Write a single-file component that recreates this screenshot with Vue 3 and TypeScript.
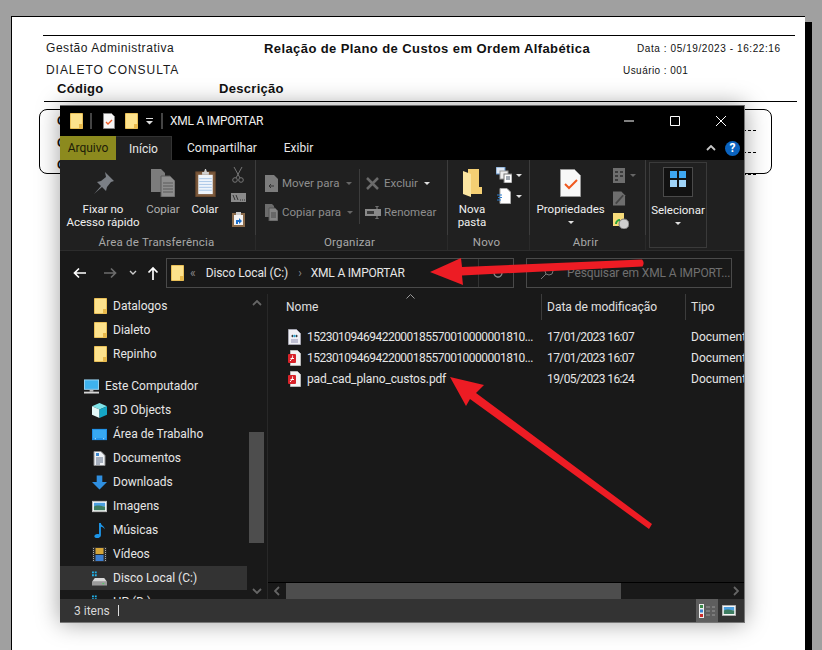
<template>
  <div class="page">
    <svg class="defs" width="0" height="0">
      <symbol id="folder" viewBox="0 0 13 16">
        <path d="M.5.5h12v15H.5z" fill="#fde28c" stroke="#e9bf57" />
        <path d="M9 11h3.500v4.500H9z" fill="#e8b84a" />
      </symbol>
      <symbol id="pdf" viewBox="0 0 13 16">
        <path d="M2.500.5h7l3 3v12h-10z" fill="#f4f4f4" stroke="#b9b9b9" />
        <rect x="0" y="4" width="8" height="9" rx="1" fill="#d8232a" />
        <path d="M2 11c2-2 3-4 2.500-5.500M2.500 8.500h3.500" stroke="#fff" fill="none" />
      </symbol>
      <symbol id="xmlfile" viewBox="0 0 13 16">
        <path d="M.5.5h8l4 4v11H.5z" fill="#f0f0f4" stroke="#a5a5b0" />
        <path d="M3 11h7M3 13h7" stroke="#8f8fb0" />
        <path d="M3 7l2-1.500v3zM10 7L8 5.500v3z" fill="#333" />
        <circle cx="6.500" cy="7" r="1.300" fill="#2f9fc9" />
      </symbol>
      <symbol id="pc" viewBox="0 0 16 15">
        <rect x=".5" y=".5" width="15" height="10" fill="#3fb2ee" stroke="#9ed7f5" />
        <path d="M6 11h4v2H6z" fill="#bbb" />
        <path d="M0 13h16v2H0z" fill="#d5d5d5" />
      </symbol>
      <symbol id="cube" viewBox="0 0 16 16">
        <path d="M8 0l8 3.500L8 7 0 3.500z" fill="#7fe3e8" />
        <path d="M0 3.500L8 7v9l-8-3.500z" fill="#e4f8f8" />
        <path d="M16 3.500L8 7v9l8-3.500z" fill="#15a6c6" />
      </symbol>
      <symbol id="desk" viewBox="0 0 16 12">
        <rect width="16" height="12" fill="#1f8fe6" />
        <path d="M1 1h14v9H1z" fill="#38a9f2" />
        <path d="M3 10.500h1M12 10.500h1" stroke="#fff" />
      </symbol>
      <symbol id="docs" viewBox="0 0 12 15">
        <path d="M.5.5h7l4 4v10H.5z" fill="#eef1f5" stroke="#8b8b8b" />
        <path d="M2.500 7h7M2.500 9h7M2.500 11h7M2.500 13h4" stroke="#5f6f86" />
        <path d="M2.500 2h3v3h-3z" fill="#3b87cf" />
      </symbol>
      <symbol id="dl" viewBox="0 0 16 15">
        <path d="M5 0h6v7h5l-8 8-8-8h5z" fill="#2f8fe0" />
      </symbol>
      <symbol id="pic" viewBox="0 0 16 12">
        <rect x=".5" y=".5" width="15" height="11" fill="#fff" stroke="#bfbfbf" />
        <path d="M2 2h12v4H2z" fill="#4b9fe0" />
        <path d="M2 6c3-2 6-1 12 0v4H2z" fill="#3e7d62" />
      </symbol>
      <symbol id="music" viewBox="0 0 11 16">
        <path d="M5 0h2c0 3 4 3 4 7-1-2-2-3-4-3v9c0 2-2 3-4 3s-3-1-3-2 2-3 5-2z" fill="#1c95e8" />
      </symbol>
      <symbol id="video" viewBox="0 0 14 15">
        <rect width="14" height="15" fill="#2c2c2c" />
        <path d="M3 1h8v6H3z" fill="#d5a63a" />
        <path d="M3 8h8v6H3z" fill="#3d7fd0" />
        <path d="M1 1v13M13 1v13" stroke="#aaa" stroke-dasharray="1 1" />
      </symbol>
      <symbol id="disk" viewBox="0 0 16 15">
        <path d="M0 0h2v2H0zM3 0h2v2H3zM0 3h2v2H0zM3 3h2v2H3z" fill="#22b3ea" />
        <path d="M3 7h10l3 4H0z" fill="#d8d8d8" />
        <path d="M0 11h16v4H0z" fill="#9b9b9b" />
        <path d="M11 12.500h2v1h-2z" fill="#43d65c" />
      </symbol>
    </svg>

    <div class="paper">
      <div class="rpt-head">
        <div class="rpt-row first">
          <span class="rpt-left">Gestão Administrativa</span>
          <strong class="rpt-title">Relação de Plano de Custos em Ordem Alfabética</strong>
          <span class="rpt-small">Data : 05/19/2023 - 16:22:16</span>
        </div>
        <div class="rpt-row second">
          <span class="rpt-left">DIALETO CONSULTA</span>
          <span></span>
          <span class="rpt-small user">Usuário : 001</span>
        </div>
        <div class="rpt-cols">
          <strong>Código</strong>
          <strong>Descrição</strong>
        </div>
      </div>
      <div class="rpt-box">
        <div v-for="n in 3" :key="n" class="rpt-line">
          <strong>C</strong>
          <span class="leader"></span>
        </div>
      </div>
    </div>

    <div class="window">
      <div class="titlebar">
        <svg class="t-folder"><use href="#folder" /></svg>
        <i class="t-sep"></i>
        <svg class="t-page" viewBox="0 0 12 16">
          <path d="M.5.5h8l3 3v12H.5z" fill="#f6f6f6" stroke="#888" />
          <path d="M3 9l2 2 4-4" fill="none" stroke="#ee5a24" stroke-width="1.300" />
        </svg>
        <svg class="t-folder second"><use href="#folder" /></svg>
        <svg class="t-caret" viewBox="0 0 8 8"><path d="M0 1h7v1H0zM0 4h7L3.500 7.500z" fill="#ddd" /></svg>
        <i class="t-sep two"></i>
        <span class="t-name">XML A IMPORTAR</span>
        <div class="controls">
          <svg viewBox="0 0 10 10"><path d="M0 5h10" stroke="#fff" /></svg>
          <svg viewBox="0 0 10 10"><path d="M.5.5h9v9h-9z" fill="none" stroke="#fff" /></svg>
          <svg viewBox="0 0 10 10"><path d="M0 0l10 10M10 0L0 10" stroke="#fff" /></svg>
        </div>
      </div>

      <div class="tabs">
        <span class="tab file">Arquivo</span>
        <span class="tab active">Início</span>
        <span class="tab share">Compartilhar</span>
        <span class="tab view">Exibir</span>
        <div class="tab-right">
          <svg viewBox="0 0 10 6"><path d="M1 5l4-4 4 4" fill="none" stroke="#c8c8c8" stroke-width="1.800" /></svg>
          <span class="help">?</span>
        </div>
      </div>

      <div class="ribbon">
        <section class="group clip">
          <div class="g-body">
            <div class="big fixar">
              <svg viewBox="0 0 22 22" class="ic-pin">
                <path d="M13 0l9 9-3 1-4 5-1 4-4-4-8 7 7-8-4-4 4-1 5-4z" fill="#7b7f85" />
              </svg>
              <span>Fixar no<br />Acesso rápido</span>
            </div>
            <div class="big copiar">
              <svg viewBox="0 0 24 28" class="ic-copy">
                <path d="M0 0h10l4 4v19H0z" fill="#7c7c7c" />
                <path d="M10 7h9l5 5v16H10z" fill="#8e8e8e" stroke="#5b5b5b" />
                <path d="M12 14h10M12 17h10M12 20h10M12 23h10" stroke="#5a5a5a" />
              </svg>
              <span>Copiar</span>
            </div>
            <div class="big colar">
              <svg viewBox="0 0 21 29" class="ic-paste">
                <rect x=".5" y="3" width="20" height="25.500" fill="#7d5a3c" stroke="#6a4a30" />
                <rect x="3" y="6" width="15" height="20" fill="#eef4fb" />
                <path d="M4 10h13M4 13h13M4 16h13M4 19h13M4 22h13" stroke="#a9c6e6" />
                <path d="M7 3h2l1-3h1l1 3h2v3H7z" fill="#d0d0d0" />
              </svg>
              <span>Colar</span>
            </div>
            <div class="small-col">
              <svg viewBox="0 0 12 16" class="ic-sm">
                <path d="M2 0l6 11M10 0L4 11" stroke="#777" fill="none" />
                <circle cx="3" cy="13" r="2.300" fill="none" stroke="#777" />
                <circle cx="9" cy="13" r="2.300" fill="none" stroke="#777" />
              </svg>
              <svg viewBox="0 0 15 9" class="ic-path">
                <rect width="15" height="9" fill="#8a8a8a" />
                <path d="M2 2l2 5M5 2l2 5" stroke="#333" />
                <path d="M9 7h1M11 7h1M13 7h1" stroke="#333" />
              </svg>
              <svg viewBox="0 0 13 15" class="ic-short">
                <rect y="1" width="13" height="14" fill="#8a6a4a" />
                <path d="M2 3h9v10H2z" fill="#f3f3f3" />
                <path d="M4 0h5v3H4z" fill="#ccc" />
                <path d="M4 12V8h3V6l3 3-3 3v-2H6v2z" fill="#1f6fc9" />
              </svg>
            </div>
          </div>
          <div class="g-label">Área de Transferência</div>
        </section>

        <section class="group org">
          <div class="g-body">
            <div class="org-col first">
              <div class="line">
                <svg viewBox="0 0 13 17" class="ic-line"><path d="M0 0h9l4 4v13H0z" fill="#7c7c7c" /><path d="M9 11H4m2-2l-2 2 2 2" stroke="#333" fill="none" /></svg>
                <span>Mover para</span>
                <i class="caret dim"></i>
              </div>
              <div class="line">
                <svg viewBox="0 0 13 17" class="ic-line"><path d="M0 0h7l2 2v11H0z" fill="#6c6c6c" /><path d="M4 4h6l3 3v10H4z" fill="#858585" stroke="#555" /><path d="M6 9h5M6 11h5M6 13h5" stroke="#4a4a4a" /></svg>
                <span>Copiar para</span>
                <i class="caret dim"></i>
              </div>
            </div>
            <div class="org-col">
              <div class="line">
                <svg viewBox="0 0 13 13" class="ic-x"><path d="M1 1l11 11M12 1L1 12" stroke="#6b6b6b" stroke-width="2.500" /></svg>
                <span>Excluir</span>
                <i class="caret"></i>
              </div>
              <div class="line">
                <svg viewBox="0 0 16 13" class="ic-ren"><rect y="3" width="16" height="7" fill="#8a8a8a" /><path d="M2 5h7v3H2z" fill="#3a3a3a" /><path d="M10 0h4M12 0v13M10 13h4" stroke="#8a8a8a" /></svg>
                <span>Renomear</span>
              </div>
            </div>
          </div>
          <div class="g-label">Organizar</div>
        </section>

        <section class="group novo">
          <div class="g-body">
            <div class="big nova">
              <svg viewBox="0 0 19 28" class="ic-new">
                <path d="M5 0h11v18h3v7H5z" fill="#f4cf73" />
                <path d="M0 2l8 3v23l-8-3z" fill="#fbe5a0" />
              </svg>
              <span>Nova<br />pasta</span>
            </div>
            <div class="small-col wide">
              <div class="sm-line">
                <svg viewBox="0 0 16 16" class="ic-sm16">
                  <rect width="9" height="7" fill="#dfe9f5" stroke="#5d8fc7" />
                  <rect x="4" y="4" width="8" height="8" fill="#eee" stroke="#999" />
                  <rect x="8" y="7" width="8" height="9" fill="#fff" stroke="#777" />
                  <path d="M10 10h4M10 12h4" stroke="#456" />
                </svg>
                <i class="caret"></i>
              </div>
              <div class="sm-line">
                <svg viewBox="0 0 14 16" class="ic-sm16">
                  <path d="M3 .5h7l3.500 3.500v11.500H3z" fill="#fff" stroke="#aaa" />
                  <path d="M0 7h5M1 9.500h4M0 12h4" stroke="#2d7fd0" />
                </svg>
                <i class="caret"></i>
              </div>
            </div>
          </div>
          <div class="g-label">Novo</div>
        </section>

        <section class="group abrir">
          <div class="g-body">
            <div class="big prop">
              <svg viewBox="0 0 21 28" class="ic-prop">
                <path d="M.5.5h14l6 6v21H.5z" fill="#f8f8f8" stroke="#9a9a9a" />
                <path d="M5 15l4 4 8-8" fill="none" stroke="#f0591f" stroke-width="2" />
              </svg>
              <span>Propriedades</span>
              <i class="caret"></i>
            </div>
            <div class="small-col wide open">
              <div class="sm-line">
                <svg viewBox="0 0 13 15" class="ic-13">
                  <rect width="12" height="15" fill="#6e6e6e" />
                  <path d="M2 3h3v2H2zM2 7h3v2H2zM2 11h3v2H2zM7 3h3v2H7zM7 7h3v2H7z" fill="#3b3b3b" />
                </svg>
                <i class="caret dim"></i>
              </div>
              <div class="sm-line">
                <svg viewBox="0 0 14 15" class="ic-13">
                  <path d="M0 0h9l4 4v11H0z" fill="#6e6e6e" />
                  <path d="M3 13L11 4" stroke="#444" stroke-width="2" />
                </svg>
              </div>
              <div class="sm-line">
                <svg viewBox="0 0 16 16" class="ic-sm16">
                  <rect width="11" height="13" fill="#f7dc7a" />
                  <circle cx="11" cy="11" r="5" fill="#cfcfcf" stroke="#777" />
                  <path d="M3 11a4 4 0 0 1 4-4" stroke="#2aa23a" stroke-width="2" fill="none" />
                </svg>
              </div>
            </div>
          </div>
          <div class="g-label">Abrir</div>
        </section>

        <section class="select">
          <div class="sel-icon">
            <svg viewBox="0 0 16 16">
              <path d="M0 0h7v7H0zM9 0h7v7H9z" fill="#3ea6f0" />
              <path d="M0 9h7v7H0zM9 9h7v7H9z" fill="#9fd3f7" />
            </svg>
          </div>
          <span>Selecionar</span>
          <i class="caret"></i>
        </section>
      </div>

      <div class="navbar">
        <svg class="nav-ic" viewBox="0 0 14 12"><path d="M13 6H2m4-4.500L1.500 6 6 10.500" fill="none" stroke="#fff" stroke-width="1.700" /></svg>
        <svg class="nav-ic fwd" viewBox="0 0 14 12"><path d="M1 6h11M8 1.500L12.500 6 8 10.500" fill="none" stroke="#6c6c6c" stroke-width="1.700" /></svg>
        <svg class="nav-down" viewBox="0 0 8 5"><path d="M1 1l3 3 3-3" fill="none" stroke="#ccc" stroke-width="1.400" /></svg>
        <svg class="nav-up" viewBox="0 0 12 14"><path d="M6 14V2M1.500 6.500L6 2l4.500 4.500" fill="none" stroke="#fff" stroke-width="1.700" /></svg>
        <div class="address">
          <svg class="addr-folder"><use href="#folder" /></svg>
          <span class="crumb-sep">«</span>
          <span class="crumb disk">Disco Local (C:)</span>
          <span class="crumb-gt">›</span>
          <span class="crumb cur">XML A IMPORTAR</span>
          <span class="addr-tools">
            <i class="caret dim"></i>
            <i class="addr-line"></i>
            <svg viewBox="0 0 12 12"><path d="M10 6a4 4 0 1 1-1.200-2.900" fill="none" stroke="#888" stroke-width="1.300" /></svg>
          </span>
        </div>
        <div class="search">
          <svg viewBox="0 0 14 14"><circle cx="9" cy="5" r="4" fill="none" stroke="#777" /><path d="M6 8l-5 5" stroke="#777" /></svg>
          <span>Pesquisar em XML A IMPORT...</span>
        </div>
      </div>

      <div class="body">
        <aside class="side">
          <div class="side-list">
            <div
              v-for="item in sideItems"
              :key="item.name"
              :class="['side-row', item.cls]"
            >
              <svg class="side-ic"><use :href="'#' + item.icon" /></svg>
              <span>{{ item.name }}</span>
            </div>
          </div>
          <div class="side-scroll">
            <svg class="sc-arrow" viewBox="0 0 10 6"><path d="M1 5l4-4 4 4" fill="none" stroke="#666" stroke-width="1.800" /></svg>
            <div class="side-thumb"></div>
            <svg class="sc-arrow bottom" viewBox="0 0 10 6"><path d="M1 1l4 4 4-4" fill="none" stroke="#666" stroke-width="1.800" /></svg>
          </div>
        </aside>

        <main class="files">
          <div class="file-head">
            <span class="fh name">Nome</span>
            <span class="fh">Data de modificação</span>
            <span class="fh">Tipo</span>
            <svg class="sort" viewBox="0 0 9 5"><path d="M.5 4.500L4.500.5l4 4" fill="none" stroke="#9a9a9a" /></svg>
          </div>
          <div class="file-list">
            <div v-for="f in files" :key="f.name + f.icon" class="file-row">
              <span class="file-name">
                <svg class="file-ic"><use :href="'#' + f.icon" /></svg>
                <span :class="f.long ? 'digits' : 'short'">{{ f.name }}</span>
              </span>
              <span class="file-date">{{ f.date }}</span>
              <span class="file-type">Documento</span>
            </div>
          </div>
          <div class="h-scroll">
            <svg class="h-arrow" viewBox="0 0 6 10"><path d="M5 1L1 5l4 4" fill="none" stroke="#666" stroke-width="1.800" /></svg>
            <div class="h-thumb"></div>
            <svg class="h-arrow right" viewBox="0 0 6 10"><path d="M1 1l4 4-4 4" fill="none" stroke="#666" stroke-width="1.800" /></svg>
          </div>
        </main>
      </div>

      <div class="status">
        <span>3 itens</span>
        <i class="st-bar"></i>
        <div class="st-views">
          <span class="st-btn">
            <svg viewBox="0 0 16 14">
              <rect width="5" height="14" fill="#eee" />
              <path d="M1 1h3v3H1z" fill="#3a8a4a" /><path d="M1 5.500h3v3H1z" fill="#3b82d0" /><path d="M1 10h3v3H1z" fill="#cc2a2a" />
              <path d="M7 3h4M13 3h3M7 7h4M13 7h3M7 11h4M13 11h3" stroke="#999" />
            </svg>
          </span>
          <svg class="st-thumb"><use href="#pic" /></svg>
        </div>
      </div>
    </div>

    <svg class="arrows" viewBox="0 0 822 650">
      <path d="M642 259.500q3 3 .500 7L462 275.500 463 285 430 272l31-14 1 9z" fill="#ed1c24" />
      <path d="M450 377l34 8-8 8 176 131-3 5-179-130-4 7z" fill="#ed1c24" />
    </svg>
  </div>
</template>

<script setup lang="ts">
interface SideItem {
  name: string;
  icon: string;
  cls?: string;
}

interface FileItem {
  name: string;
  icon: string;
  date: string;
  long?: boolean;
}

const sideItems: SideItem[] = [
  { name: 'Datalogos', icon: 'folder', cls: 'folder' },
  { name: 'Dialeto', icon: 'folder', cls: 'folder' },
  { name: 'Repinho', icon: 'folder', cls: 'folder' },
  { name: 'Este Computador', icon: 'pc', cls: 'root' },
  { name: '3D Objects', icon: 'cube' },
  { name: 'Área de Trabalho', icon: 'desk' },
  { name: 'Documentos', icon: 'docs' },
  { name: 'Downloads', icon: 'dl' },
  { name: 'Imagens', icon: 'pic' },
  { name: 'Músicas', icon: 'music' },
  { name: 'Vídeos', icon: 'video' },
  { name: 'Disco Local (C:)', icon: 'disk', cls: 'selected' },
  { name: 'HP (D:)', icon: 'disk' },
];

const files: FileItem[] = [
  { name: '15230109469422000185570010000001810...', icon: 'xmlfile', date: '17/01/2023 16:07', long: true },
  { name: '15230109469422000185570010000001810...', icon: 'pdf', date: '17/01/2023 16:07', long: true },
  { name: 'pad_cad_plano_custos.pdf', icon: 'pdf', date: '19/05/2023 16:24' },
];
</script>

<style>
html, body { margin: 0; padding: 0; background: #a0a0a0; }
</style>

<style scoped>
.page {
  position: relative;
  width: 822px;
  height: 650px;
  overflow: hidden;
  background: #a0a0a0;
  padding: 16px 0 0 11px;
  box-sizing: border-box;
  font-family: "Roboto", "Open Sans", sans-serif;
}

.defs { position: absolute; }

/* relatorio atras da janela */
.paper {
  width: 794px;
  height: 660px;
  box-sizing: border-box;
  background: #fff;
  border-top: 1px solid #000;
  border-left: 1px solid #000;
  box-shadow: 7px 6px 0 #000;
  padding: 18px 0 0 31px;
  font-family: "Liberation Sans", Arial, sans-serif;
  color: #111;
}

.rpt-head {
  width: 752px;
  border-top: 1px solid #000;
  height: 66px;
}

.rpt-row {
  display: grid;
  grid-template-columns: 218px 373px 1fr;
  padding-left: 3px;
  align-items: center;
}
.rpt-row.first { height: 24px; }
.rpt-row.second { height: 20px; }

.rpt-left { font-size: 12px; letter-spacing: .55px; color: #1a1a1a; }
.rpt-row.second .rpt-left { letter-spacing: .95px; }
.rpt-title { font-size: 13px; white-space: nowrap; letter-spacing: .41px; }
.rpt-small { font-size: 10px; letter-spacing: .58px; white-space: nowrap; }
.rpt-small.user { margin-left: -14px; letter-spacing: .45px; }

.rpt-cols {
  display: grid;
  grid-template-columns: 162px 1fr;
  box-sizing: border-box;
  margin: 0 -2px 0 1px;
  padding-left: 13px;
  font-size: 13px;
  height: 22px;
  line-height: 18px;
  letter-spacing: .3px;
  border-bottom: 1px solid #000;
}

.rpt-box {
  margin: 7px 0 0 -4px;
  width: 733px;
  height: 65px;
  box-sizing: border-box;
  border: 1px solid #000;
  border-radius: 8px;
}

.rpt-line {
  display: flex;
  height: 22px;
  padding-left: 17px;
  font-size: 12px;
  line-height: 22px;
}

.leader {
  flex: 1;
  height: 20px;
  border-bottom: 1px dashed #000;
  margin-right: 15px;
}

/* janela do explorer */
.window {
  position: absolute;
  left: 60px;
  top: 105px;
  width: 685px;
  height: 518px;
  background: #000;
  color: #e8e8e8;
  border-top: 1px solid #666;
  border-bottom: 1px solid #777;
  border-right: 1px solid #777;
  box-sizing: border-box;
  box-shadow: 0 0 22px rgba(0, 0, 0, .38);
  display: flex;
  flex-direction: column;
  font-size: 12px;
}

.titlebar {
  height: 30px;
  flex: none;
  display: flex;
  align-items: center;
  padding-left: 10px;
}

.t-folder { width: 13px; height: 16px; flex: none; }
.t-folder.second { margin-left: 10px; }
.t-sep { width: 2px; height: 16px; background: #444; margin-left: 7px; flex: none; }
.t-sep.two { margin-left: 7px; }
.t-page { width: 12px; height: 16px; margin-left: 11px; flex: none; }
.t-caret { width: 8px; height: 8px; margin-left: 8px; flex: none; }
.t-name { margin-left: 7px; color: #eee; font-size: 12px; letter-spacing: -.25px; }

.controls {
  margin-left: auto;
  display: flex;
  gap: 36px;
  padding-right: 18px;
}
.controls svg { width: 10px; height: 10px; display: block; }

.tabs {
  height: 24px;
  flex: none;
  display: flex;
  align-items: stretch;
  line-height: 24px;
}

.tab { color: #e8e8e8; }
.tab.file { width: 56px; background: #8c8a1e; color: #1c1c08; text-align: center; }
.tab.active {
  width: 56px;
  background: #202020;
  text-align: center;
  border-top: 1px solid #333;
  border-right: 1px solid #333;
  box-sizing: border-box;
}
.tab.share { margin-left: 15px; }
.tab.view { margin-left: 27px; }

.tab-right {
  margin-left: auto;
  display: flex;
  align-items: center;
  gap: 9px;
  padding-right: 4px;
}
.tab-right svg { width: 10px; height: 6px; }
.help {
  width: 15px;
  height: 15px;
  border-radius: 50%;
  background: #0a63bf;
  color: #fff;
  font-weight: 700;
  font-size: 12px;
  line-height: 15px;
  text-align: center;
}

.ribbon {
  height: 91px;
  flex: none;
  background: #202020;
  display: flex;
  border-bottom: 1px solid #2c2c2c;
  box-sizing: border-box;
  font-size: 11.500px;
  color: #f0f0f0;
}

.group {
  display: flex;
  flex-direction: column;
  box-sizing: border-box;
}
.group.clip { width: 196px; }
.group.org { width: 192px; }
.group.novo { width: 82px; }
.group.abrir { width: 116px; }

.g-body {
  height: 75px;
  flex: none;
  display: flex;
  box-sizing: border-box;
  border-right: 1px solid #3c3c3c;
}
.g-label {
  height: 15px;
  text-align: center;
  line-height: 14px;
  color: #a8a8a8;
  font-size: 11.500px;
  letter-spacing: .2px;
  padding-right: 4px;
  box-sizing: border-box;
  border-right: 1px solid #2a2a2a;
}
.group.clip .g-label { padding-right: 2px; }

.big {
  display: flex;
  flex-direction: column;
  align-items: center;
  text-align: center;
  line-height: 13px;
  position: relative;
  white-space: nowrap;
}
.big svg { height: 28px; margin: 9px 0 6px; display: block; flex: none; }
.big span { display: block; }

.fixar { width: 74px; margin-left: 6px; }
.copiar { width: 46px; color: #b0b0b0; }
.colar { width: 38px; }
.ic-pin { width: 22px; }
.ic-copy { width: 24px; }
.ic-paste { width: 21px; }

.small-col {
  width: 28px;
  display: flex;
  flex-direction: column;
  align-items: center;
  padding-top: 7px;
  gap: 10px;
}
.ic-sm { width: 12px; height: 16px; }
.ic-path { width: 15px; height: 9px; }
.ic-short { width: 13px; height: 15px; }

.org-col {
  display: flex;
  flex-direction: column;
  gap: 11px;
  padding: 14px 0 0 6px;
  color: #8e8e8e;
  height: 62px;
  box-sizing: border-box;
}
.org-col.first {
  width: 104px;
  height: 55px;
  margin-top: 9px;
  padding: 5px 0 0 9px;
  border-right: 1px solid #3c3c3c;
}
.line {
  display: flex;
  align-items: center;
  height: 18px;
  flex: none;
  gap: 4px;
  white-space: nowrap;
}
.ic-line { width: 13px; height: 17px; flex: none; }
.ic-x { width: 13px; height: 13px; flex: none; margin-right: 1px; }
.ic-ren { width: 16px; height: 13px; flex: none; margin-left: -1px; margin-right: -1px; }
.line .caret { margin-left: 2px; }

.caret {
  display: inline-block;
  width: 0;
  height: 0;
  border-left: 3px solid transparent;
  border-right: 3px solid transparent;
  border-top: 3px solid #e0e0e0;
}
.caret.dim { border-top-color: #666; }

.nova { width: 46px; margin-left: 1px; }
.ic-new { width: 19px; }
.small-col.wide { align-items: flex-start; padding: 7px 0 0 1px; width: 32px; gap: 5px; }
.small-col.open { gap: 7px; padding-left: 3px; }
.sm-line { display: flex; align-items: center; gap: 4px; height: 16px; }
.ic-sm16 { width: 16px; height: 16px; }
.ic-13 { width: 13px; height: 15px; }

.prop { width: 80px; margin-left: 1px; }
.ic-prop { width: 21px; }
.prop .caret { margin-top: 5px; }

.select {
  width: 58px;
  margin: 2px 0 2px 3px;
  border: 1px solid #3a3a3a;
  box-sizing: border-box;
  display: flex;
  flex-direction: column;
  align-items: center;
  line-height: 13px;
  white-space: nowrap;
}
.sel-icon {
  width: 30px;
  height: 30px;
  box-sizing: border-box;
  background: #111;
  border: 1px solid #4a4a4a;
  margin: 4px 0 7px;
  display: flex;
  justify-content: center;
  padding-top: 3px;
}
.sel-icon svg { width: 16px; height: 16px; }
.select .caret { margin-top: 5px; }

.navbar {
  height: 43px;
  flex: none;
  background: #191919;
  display: flex;
  align-items: center;
  padding-left: 13px;
}
.nav-ic { width: 14px; height: 12px; flex: none; }
.nav-ic.fwd { margin-left: 16px; }
.nav-down { width: 8px; height: 5px; margin-left: 12px; flex: none; }
.nav-up { width: 12px; height: 14px; margin-left: 10px; flex: none; }

.address {
  width: 348px;
  height: 30px;
  margin-left: 7px;
  box-sizing: border-box;
  border: 1px solid #4a4a4a;
  display: flex;
  align-items: center;
  padding-left: 4px;
  color: #e6e6e6;
  white-space: nowrap;
}
.addr-folder { width: 13px; height: 16px; flex: none; }
.crumb-sep { margin-left: 6px; color: #888; }
.crumb { margin-left: 9px; }
.crumb.disk { margin-left: 10px; letter-spacing: -.1px; }
.crumb.cur { letter-spacing: -.2px; }
.crumb-gt { margin-left: 10px; color: #888; }
.addr-tools {
  margin-left: auto;
  display: flex;
  align-items: center;
  gap: 13px;
  padding-right: 9px;
}
.addr-line { width: 1px; height: 28px; background: #333; }
.addr-tools svg { width: 12px; height: 12px; }

.search {
  width: 206px;
  height: 30px;
  margin-left: 12px;
  box-sizing: border-box;
  border: 1px solid #4a4a4a;
  display: flex;
  align-items: center;
  padding-left: 13px;
  gap: 13px;
  color: #707070;
  white-space: nowrap;
  letter-spacing: -.1px;
}
.search svg { width: 14px; height: 14px; flex: none; }

.body {
  flex: 1;
  display: flex;
  min-height: 0;
  background: #191919;
}

.side {
  width: 207px;
  flex: none;
  display: flex;
  border-right: 1px solid #282828;
  overflow: hidden;
}
.side-list { width: 187px; flex: none; }

.side-row {
  height: 24px;
  display: flex;
  align-items: center;
  padding-left: 32px;
  gap: 6px;
  color: #e6e6e6;
  white-space: nowrap;
}
.side-row.folder { padding-left: 34px; gap: 6px; }
.side-row.root { padding-left: 24px; margin-top: 8px; }
.side-row.selected { background: #333; }

.side-ic { width: 15px; height: 15px; flex: none; }
.side-row.folder .side-ic { width: 13px; height: 16px; }

.side-scroll {
  width: 15px;
  margin-left: 2px;
  display: flex;
  flex-direction: column;
  align-items: center;
  padding-top: 6px;
  height: 305px;
  box-sizing: border-box;
}
.sc-arrow { width: 10px; height: 6px; flex: none; }
.sc-arrow.bottom { margin-top: 45px; }
.side-thumb { width: 15px; height: 111px; background: #4d4d4d; margin-top: 126px; flex: none; }

.files {
  flex: 1;
  min-width: 0;
  display: flex;
  flex-direction: column;
  overflow: hidden;
}

.file-head {
  position: relative;
  display: grid;
  grid-template-columns: 273px 144px 1fr;
  height: 24px;
  flex: none;
  line-height: 26px;
  color: #e0e0e0;
}
.fh { padding-left: 5px; border-left: 1px solid #3c3c3c; white-space: nowrap; }
.fh.name { padding-left: 18px; border-left: none; }
.sort { position: absolute; left: 138px; top: 0; width: 9px; height: 5px; }

.file-list { flex: 1; padding-top: 8px; }

.file-row {
  display: grid;
  grid-template-columns: 273px 144px 1fr;
  height: 21px;
  align-items: center;
  white-space: nowrap;
  color: #e6e6e6;
}
.file-name { display: flex; align-items: center; padding-left: 20px; gap: 6px; }
.file-ic { width: 13px; height: 16px; flex: none; }
.digits { letter-spacing: -.52px; }
.short { letter-spacing: -.13px; }
.file-date { padding-left: 6px; letter-spacing: -.6px; }
.file-type { padding-left: 6px; }

.h-scroll {
  position: relative;
  height: 17px;
  flex: none;
  border-top: 1px solid #000;
  box-sizing: border-box;
  display: flex;
  align-items: center;
  padding-left: 6px;
}
.h-arrow { width: 6px; height: 10px; flex: none; }
.h-arrow.right { margin-left: 112px; }
.h-thumb { width: 335px; height: 16px; background: #4d4d4d; margin-left: 6px; flex: none; }

.status {
  height: 23px;
  flex: none;
  background: #333;
  display: flex;
  align-items: center;
  padding-left: 14px;
  color: #d8d8d8;
}
.st-bar { width: 1px; height: 11px; background: #ddd; margin-left: 8px; }
.st-views {
  margin-left: auto;
  display: flex;
  align-items: center;
  height: 100%;
  padding-right: 8px;
  gap: 4px;
}
.st-btn {
  width: 22px;
  height: 100%;
  background: #5e5e5e;
  display: flex;
  align-items: center;
  justify-content: center;
}
.st-btn svg { width: 16px; height: 14px; }
.st-thumb { width: 14px; height: 11px; }

.arrows {
  position: absolute;
  left: 0;
  top: 0;
  width: 822px;
  height: 650px;
  pointer-events: none;
}
</style>
